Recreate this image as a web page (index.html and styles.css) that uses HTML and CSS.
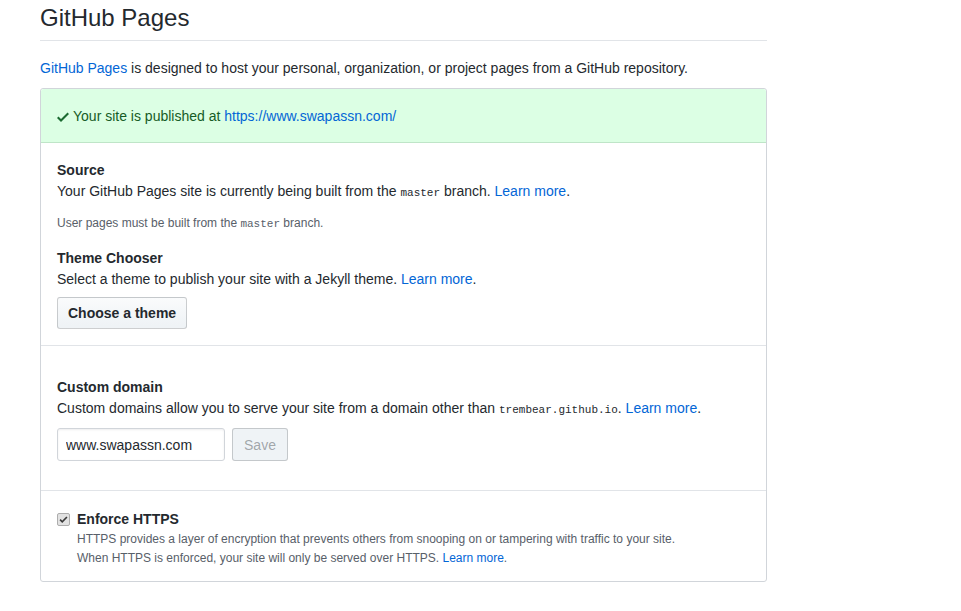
FILE: index.html
```html
<!DOCTYPE html>
<html>
<head>
<meta charset="utf-8">
<link rel="stylesheet" href="styles.css">
</head>
<body>
<div class="page">
  <div class="subhead">
    <h2 class="subhead-title">GitHub Pages</h2>
  </div>
  <p class="intro"><a href="#">GitHub Pages</a> is designed to host your personal, organization, or project pages from a GitHub repository.</p>

  <div class="box">
    <div class="flash">
      <svg class="check" viewBox="0 0 12 16" width="12" height="16" aria-hidden="true"><path fill-rule="evenodd" d="M12 5l-8 8-4-4 1.5-1.5L4 10l6.5-6.5L12 5z"></path></svg>
      <span>Your site is published at <a href="#">https://www.swapassn.com/</a></span>
    </div>

    <div class="row row-source">
      <h4 class="label">Source</h4>
      <p class="text">Your GitHub Pages site is currently being built from the <code>master</code> branch. <a href="#">Learn more</a>.</p>
      <p class="note">User pages must be built from the <code>master</code> branch.</p>
      <h4 class="label label-theme">Theme Chooser</h4>
      <p class="text">Select a theme to publish your site with a Jekyll theme. <a href="#">Learn more</a>.</p>
      <button class="btn btn-theme" type="button">Choose a theme</button>
    </div>

    <div class="row row-domain">
      <h4 class="label">Custom domain</h4>
      <p class="text">Custom domains allow you to serve your site from a domain other than <code>trembear.github.io</code>. <a href="#">Learn more</a>.</p>
      <div class="domain-form">
        <input class="form-control" type="text" value="www.swapassn.com">
        <button class="btn btn-disabled" type="button" disabled>Save</button>
      </div>
    </div>

    <div class="row row-https">
      <div class="check-row">
        <span class="cb" role="checkbox" aria-checked="true" aria-disabled="true">
          <svg viewBox="0 0 10 10" width="9" height="9" aria-hidden="true"><path d="M1.2 5.2l2.4 2.4L8.8 2.2" fill="none" stroke="#3a3a3a" stroke-width="1.8"></path></svg>
        </span>
        <div class="check-body">
          <h4 class="label">Enforce HTTPS</h4>
          <p class="https-note">HTTPS provides a layer of encryption that prevents others from snooping on or tampering with traffic to your site.<br>When HTTPS is enforced, your site will only be served over HTTPS. <a href="#">Learn more</a>.</p>
        </div>
      </div>
    </div>
  </div>
</div>
</body>
</html>
```

FILE: styles.css
```css
* { box-sizing: border-box; }

html, body {
  margin: 0;
  padding: 0;
  background: #fff;
}

body {
  font-family: "Liberation Sans", Arial, sans-serif;
  font-size: 14px;
  line-height: 1.5;
  color: #24292e;
}

a {
  color: #0366d6;
  text-decoration: none;
}

code {
  font-family: "Liberation Mono", "DejaVu Sans Mono", monospace;
  font-size: 11px;
}

.page {
  width: 727px;
  margin-left: 40px;
}

.subhead {
  padding-bottom: 4px;
  border-bottom: 1px solid #e1e4e8;
}

.subhead-title {
  margin: 0;
  font-size: 24px;
  font-weight: 400;
  line-height: 36px;
}

.intro {
  margin: 17px 0 9px;
  line-height: 21px;
}

.box {
  border: 1px solid #d1d5da;
  border-radius: 3px;
}

.flash {
  display: flex;
  align-items: center;
  gap: 4px;
  padding: 17px 16px 15px;
  line-height: 21px;
  color: #165c26;
  background: #dcffe4;
  border-bottom: 1px solid #bfe5c8;
  border-radius: 3px 3px 0 0;
}

.check {
  fill: #1b6b31;
  flex: none;
}

.row {
  padding: 16px 16px;
  border-top: 1px solid #e1e4e8;
}

.flash + .row { border-top: 0; }

.row-source {
  padding-top: 17px;
}

.label {
  margin: 0;
  font-size: 14px;
  font-weight: 700;
  line-height: 21px;
}

.text {
  margin: 0;
  line-height: 21px;
}

.note {
  margin: 10px 0 0;
  font-size: 12px;
  line-height: 18px;
  color: #586069;
}

.label-theme {
  margin-top: 15px;
}

.btn {
  display: inline-block;
  padding: 6px 10px;
  font-family: inherit;
  font-size: 14px;
  font-weight: 700;
  line-height: 18px;
  white-space: nowrap;
  color: #24292e;
  background-color: #eff3f6;
  background-image: linear-gradient(-180deg, #fafbfc 0%, #eff3f6 90%);
  border: 1px solid rgba(27, 31, 35, 0.2);
  border-radius: 3px;
  cursor: pointer;
}

.btn-theme {
  margin-top: 7px;
  height: 32px;
}

.row-domain {
  padding-top: 31px;
  padding-bottom: 29px;
}

.domain-form {
  display: flex;
  align-items: center;
  gap: 7px;
  margin-top: 7px;
}

.form-control {
  width: 168px;
  height: 33px;
  padding: 6px 8px;
  font-family: inherit;
  font-size: 14px;
  color: #24292e;
  background: #fff;
  border: 1px solid #d1d5da;
  border-radius: 3px;
  box-shadow: inset 0 1px 2px rgba(27, 31, 35, 0.075);
  outline: none;
}

.domain-form .btn {
  width: 56px;
  height: 33px;
  padding: 6px 0;
  text-align: center;
}

.btn-disabled {
  color: rgba(36, 41, 46, 0.4);
  background-image: none;
  background-color: #eff3f6;
  border-color: rgba(27, 31, 35, 0.2);
  font-weight: 400;
  cursor: default;
}

.row-https {
  padding-top: 18px;
  padding-bottom: 13px;
}

.check-row {
  display: flex;
  align-items: flex-start;
  gap: 7px;
}

.cb {
  display: flex;
  align-items: center;
  justify-content: center;
  margin-top: 4px;
  width: 13px;
  height: 13px;
  flex: none;
  background: #e2e2e2;
  border: 1px solid #adadad;
  border-radius: 2px;
}

.https-note {
  margin: 0;
  font-size: 12px;
  line-height: 19px;
  color: #586069;
}
```
